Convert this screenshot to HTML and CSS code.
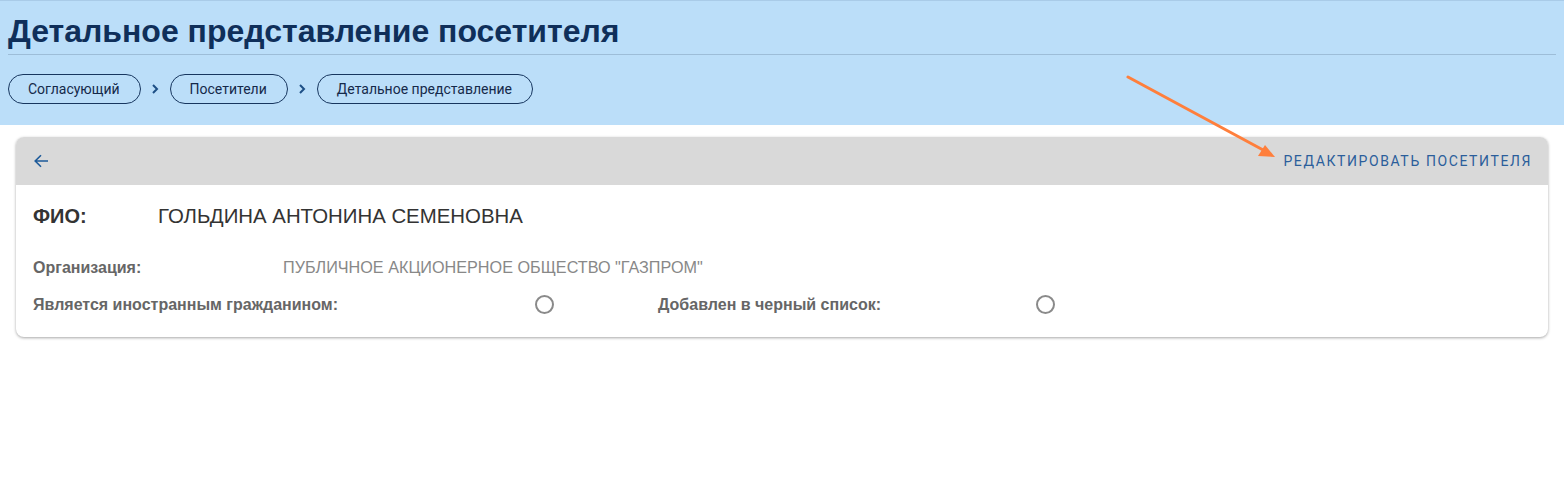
FILE: index.html
```html
<!DOCTYPE html>
<html lang="ru">
<head>
<meta charset="utf-8">
<title>Детальное представление посетителя</title>
<link rel="stylesheet" href="styles.css">
</head>
<body>
<header class="page-head">
  <h1 class="page-title">Детальное представление посетителя</h1>
  <nav class="crumbs">
    <a class="crumb">Согласующий</a>
    <span class="sep"><svg width="8" height="12" viewBox="0 0 8 12"><path d="M2 2l4 4-4 4" fill="none" stroke="#1d4f86" stroke-width="2"/></svg></span>
    <a class="crumb">Посетители</a>
    <span class="sep"><svg width="8" height="12" viewBox="0 0 8 12"><path d="M2 2l4 4-4 4" fill="none" stroke="#1d4f86" stroke-width="2"/></svg></span>
    <a class="crumb">Детальное представление</a>
  </nav>
</header>

<main class="content">
  <section class="card">
    <div class="card-bar">
      <button class="back" aria-label="Назад">
        <svg width="16" height="16" viewBox="0 0 16 16"><path d="M15 8H2.5M8 2.2L2.2 8 8 13.8" fill="none" stroke="#1d5a99" stroke-width="1.6"/></svg>
      </button>
      <a class="edit">Редактировать посетителя</a>
    </div>
    <div class="card-body">
      <div class="fio">
        <span class="fio-label">ФИО:</span>
        <span class="fio-value">ГОЛЬДИНА АНТОНИНА СЕМЕНОВНА</span>
      </div>
      <div class="row">
        <span class="label org-label">Организация:</span>
        <span class="value">ПУБЛИЧНОЕ АКЦИОНЕРНОЕ ОБЩЕСТВО "ГАЗПРОМ"</span>
      </div>
      <div class="row">
        <span class="label foreign-label">Является иностранным гражданином:</span>
        <span class="radio"></span>
        <span class="label black-label">Добавлен в черный список:</span>
        <span class="radio"></span>
      </div>
    </div>
  </section>
</main>

<svg class="annot" width="170" height="100" viewBox="0 0 170 100">
  <line x1="3" y1="2" x2="140" y2="76" stroke="#ff7f3c" stroke-width="3" stroke-linecap="round"/>
  <path d="M150 82 L133 81 L140 70 Z" fill="#ff7f3c"/>
</svg>
</body>
</html>
```
FILE: styles.css
```css
* { box-sizing: border-box; }
html, body { margin: 0; padding: 0; background: #fff; }
body { font-family: Roboto, "Liberation Sans", Arial, sans-serif; color: #333; position: relative; }

.page-head {
  background: #bbdef9;
  border-top: 1px solid #a9cbe8;
  padding: 12px 8px 21px;
}
.page-title {
  margin: 0;
  font-family: "Liberation Sans", Arial, sans-serif;
  font-weight: 700;
  font-size: 32px;
  line-height: 36px;
  color: #0f2f5a;
  padding-bottom: 5px;
  border-bottom: 1px solid #9dbdd8;
}
.crumbs {
  display: flex;
  align-items: center;
  margin-top: 19px;
}
.crumb {
  display: inline-flex;
  align-items: center;
  height: 30px;
  padding: 0 20px 0 19px;
  border: 1px solid #17365f;
  border-radius: 15px;
  font-size: 14px;
  color: #15294a;
}
.sep { display: inline-flex; width: 29px; justify-content: center; }

.content { padding: 12px 16px; }
.card {
  border-radius: 8px;
  background: #fff;
  box-shadow: 0 1px 3px rgba(0,0,0,0.35);
  overflow: hidden;
}
.card-bar {
  height: 48px;
  background: #d9d9d9;
  display: flex;
  align-items: center;
  justify-content: space-between;
  padding: 0 16px 0 17px;
}
.back { border: 0; background: none; padding: 0; display: flex; cursor: pointer; }
.edit {
  font-size: 14px;
  letter-spacing: 1.6px;
  text-transform: uppercase;
  color: #2b5e9b;
}
.card-body { padding: 18px 17px 14px; }
.fio { display: flex; align-items: center; height: 26px; }
.fio-label {
  width: 125px;
  font-family: "Liberation Sans", Arial, sans-serif;
  font-weight: 700;
  font-size: 20px;
  color: #333;
}
.fio-value { font-family: "Liberation Sans", Arial, sans-serif; font-size: 20.4px; color: #333; }
.row { display: flex; align-items: center; height: 37px; }
.row:nth-child(2) { margin-top: 20px; }
.label {
  font-family: "Liberation Sans", Arial, sans-serif;
  font-weight: 700;
  font-size: 16px;
  color: #666;
}
.org-label { width: 250px; }
.value { font-family: "Liberation Sans", Arial, sans-serif; font-size: 16.2px; color: #888; }
.foreign-label { width: 502px; }
.black-label { width: 378px; margin-left: 104px; }
.radio {
  width: 19px; height: 19px;
  border: 2px solid #8a8a8a;
  border-radius: 50%;
}

.annot { position: absolute; left: 1125px; top: 75px; }
```
